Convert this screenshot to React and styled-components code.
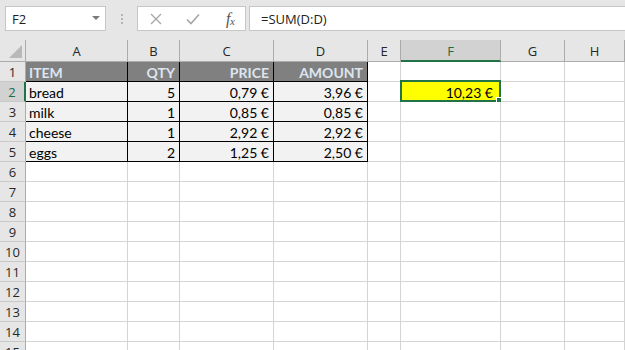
import React from "react";
import styled, { createGlobalStyle } from "styled-components";

const Global = createGlobalStyle`
  html, body { margin: 0; padding: 0; }
  body { width: 625px; height: 350px; overflow: hidden; background: #ffffff; font-family: "Open Sans", sans-serif; }
`;

const Page = styled.div`
  width: 625px;
  height: 350px;
  overflow: hidden;
  display: flex;
  flex-direction: column;
`;

const Toolbar = styled.div`
  height: 40px;
  flex: none;
  box-sizing: border-box;
  background: #e6e6e6;
  display: flex;
  align-items: flex-start;
  padding: 6px 0 0 5px;
`;

const NameBox = styled.div`
  width: 101px;
  height: 25px;
  box-sizing: border-box;
  background: #fff;
  border: 1px solid #c6c6c6;
  display: flex;
  align-items: center;
  justify-content: space-between;
  padding: 0 5px 0 6px;
  font-family: "Open Sans", sans-serif;
  font-size: 13px;
  color: #222;
`;

const Caret = styled.span`
  width: 0;
  height: 0;
  border-left: 4px solid transparent;
  border-right: 4px solid transparent;
  border-top: 4px solid #7a7a7a;
  margin-top: -2px;
`;

const Dots = styled.div`
  width: 31px;
  height: 25px;
  display: flex;
  flex-direction: column;
  align-items: center;
  justify-content: center;
  gap: 2px;
  span {
    width: 2px;
    height: 2px;
    background: #b4b4b4;
  }
`;

const FxBox = styled.div`
  width: 109px;
  height: 25px;
  box-sizing: border-box;
  background: #fff;
  border: 1px solid #c6c6c6;
  display: flex;
  align-items: center;
  padding: 0 0 0 12px;
  gap: 24px;
`;

const FxLabel = styled.span`
  font-family: "Liberation Serif", serif;
  font-style: italic;
  font-size: 16px;
  color: #555;
  margin-left: 2px;
  letter-spacing: -0.5px;
  line-height: 1;
  sub {
    font-size: 11px;
    vertical-align: -1px;
  }
`;

const FormulaInput = styled.div`
  flex: 1;
  margin-left: 3px;
  height: 25px;
  box-sizing: border-box;
  background: #fff;
  border: 1px solid #c6c6c6;
  border-right: none;
  display: flex;
  align-items: center;
  padding-left: 11px;
  font-family: "Open Sans", sans-serif;
  font-size: 13px;
  color: #222;
`;

const Sheet = styled.div`
  display: grid;
  grid-template-columns: 26px 102px 52px 94px 94px 33px 100px 64px 1fr;
  grid-template-rows: 22px repeat(15, 20px);
`;

const Corner = styled.div`
  background: #e6e6e6;
  border-right: 1px solid #ababab;
  border-bottom: 1px solid #ababab;
  box-sizing: border-box;
  position: relative;
  &::after {
    content: "";
    position: absolute;
    right: 3px;
    bottom: 3px;
    width: 0;
    height: 0;
    border-left: 13px solid transparent;
    border-bottom: 13px solid #b9b9b9;
  }
`;

const ColHead = styled.div`
  box-sizing: border-box;
  background: ${(p) => (p.$sel ? "#d2d2d2" : "#e6e6e6")};
  border-right: 1px solid #ababab;
  border-bottom: ${(p) => (p.$sel ? "2px solid #217346" : "1px solid #ababab")};
  display: flex;
  align-items: center;
  justify-content: center;
  font-family: "Open Sans", sans-serif;
  font-size: 13px;
  color: ${(p) => (p.$sel ? "#1e6b40" : "#262626")};
  padding-top: 1px;
`;

const RowHead = styled.div`
  box-sizing: border-box;
  background: ${(p) => (p.$sel ? "#d2d2d2" : "#e6e6e6")};
  border-right: ${(p) => (p.$sel ? "2px solid #217346" : "1px solid #ababab")};
  border-bottom: 1px solid #c8c8c8;
  display: flex;
  align-items: center;
  justify-content: center;
  font-family: "Open Sans", sans-serif;
  font-size: 13px;
  color: ${(p) => (p.$sel ? "#1e6b40" : "#262626")};
`;

const bgFor = (k) =>
  k === "head" ? "#808080" : k === "data" ? "#f2f2f2" : k === "yellow" ? "#ffff00" : "#ffffff";

const Cell = styled.div`
  position: relative;
  box-sizing: border-box;
  background: ${(p) => bgFor(p.$kind)};
  border-right: 1px solid ${(p) => (p.$kind === "head" || p.$kind === "data" ? "#000" : "#d4d4d4")};
  border-bottom: 1px solid ${(p) => (p.$kind === "head" || p.$kind === "data" ? "#000" : "#d4d4d4")};
  display: flex;
  align-items: center;
  justify-content: ${(p) => (p.$right ? "flex-end" : "flex-start")};
  padding: 1px ${(p) => (p.$kind === "yellow" ? "7px" : "4px")} 0 3px;
  font-family: Lato, "Open Sans", sans-serif;
  font-size: 14px;
  font-weight: ${(p) => (p.$kind === "head" ? 700 : 400)};
  color: ${(p) => (p.$kind === "head" ? "#dde5ef" : "#000")};
  white-space: nowrap;
  overflow: visible;
`;

const Selection = styled.div`
  position: absolute;
  left: -1px;
  top: -2px;
  right: -1px;
  bottom: -1px;
  border: 2px solid #217346;
  pointer-events: none;
  &::after {
    content: "";
    position: absolute;
    right: -4px;
    bottom: -4px;
    width: 5px;
    height: 5px;
    background: #217346;
    border: 1px solid #fff;
  }
`;

const CellText = styled.span`
  position: relative;
  z-index: 1;
`;

const cols = ["A", "B", "C", "D", "E", "F", "G", "H"];

const tableRows = [
  ["ITEM", "QTY", "PRICE", "AMOUNT"],
  ["bread", "5", "0,79 €", "3,96 €"],
  ["milk", "1", "0,85 €", "0,85 €"],
  ["cheese", "1", "2,92 €", "2,92 €"],
  ["eggs", "2", "1,25 €", "2,50 €"],
];

function XIcon() {
  return (
    <svg width="12" height="12" viewBox="0 0 12 12">
      <path d="M1 1 L11 11 M11 1 L1 11" stroke="#a6a6a6" strokeWidth="1.3" fill="none" />
    </svg>
  );
}

function CheckIcon() {
  return (
    <svg width="14" height="12" viewBox="0 0 14 12">
      <path d="M1 6.5 L5 10.5 L13 1.5" stroke="#a6a6a6" strokeWidth="1.6" fill="none" />
    </svg>
  );
}

export default function App() {
  const rows = [];
  for (let r = 1; r <= 15; r++) {
    rows.push(
      <RowHead key={"rh" + r} $sel={r === 2}>
        {r}
      </RowHead>
    );
    cols.forEach((c, ci) => {
      let kind = "plain";
      let text = "";
      let right = false;
      if (r <= 5 && ci < 4) {
        kind = r === 1 ? "head" : "data";
        text = tableRows[r - 1][ci];
        right = ci > 0;
      }
      const isSel = r === 2 && c === "F";
      if (isSel) {
        kind = "yellow";
        text = "10,23 €";
        right = true;
      }
      rows.push(
        <Cell key={c + r} $kind={kind} $right={right}>
          {isSel && <Selection />}
          {text && <CellText>{text}</CellText>}
        </Cell>
      );
    });
  }

  return (
    <Page>
      <Global />
      <Toolbar>
        <NameBox>
          <span>F2</span>
          <Caret />
        </NameBox>
        <Dots>
          <span />
          <span />
          <span />
        </Dots>
        <FxBox>
          <XIcon />
          <CheckIcon />
          <FxLabel>
            f<sub>x</sub>
          </FxLabel>
        </FxBox>
        <FormulaInput>=SUM(D:D)</FormulaInput>
      </Toolbar>
      <Sheet>
        <Corner />
        {cols.map((c) => (
          <ColHead key={c} $sel={c === "F"}>
            {c}
          </ColHead>
        ))}
        {rows}
      </Sheet>
    </Page>
  );
}
